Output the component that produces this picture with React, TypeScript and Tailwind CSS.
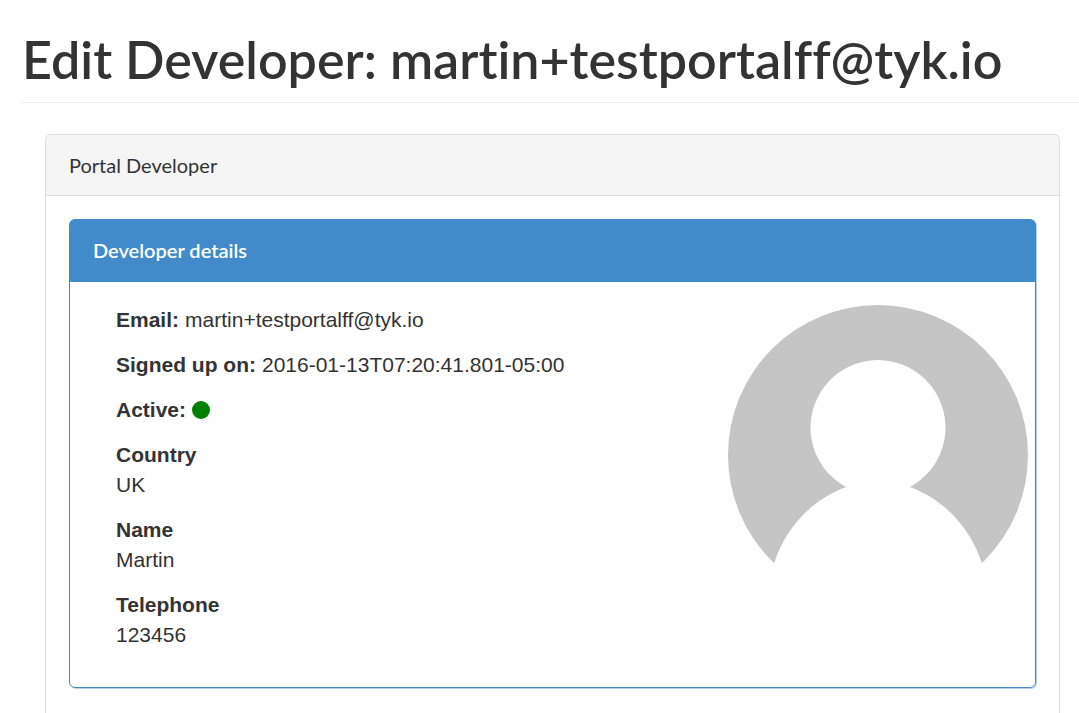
import type { ReactNode } from "react";

const profile = [
  { label: "Country", value: "UK" },
  { label: "Name", value: "Martin" },
  { label: "Telephone", value: "123456" },
];

function InlineField({ label, children }: { label: string; children: ReactNode }) {
  return (
    <div className="flex flex-wrap items-center gap-x-1.5">
      <dt className="font-bold">{label}</dt>
      <dd>{children}</dd>
    </div>
  );
}

function Avatar() {
  return (
    <svg
      viewBox="0 0 300 300"
      role="img"
      aria-label="Developer avatar"
      className="size-[300px] shrink-0"
    >
      <circle cx="150" cy="150" r="150" fill="#c5c5c5" />
      <path
        d="M118 182A67.500 67.500 0 1 1 182 182C217 195 244 224 255 262V300H45V262C56 224 83 195 118 182Z"
        fill="#ffffff"
      />
    </svg>
  );
}

export default function App() {
  return (
    <main className="min-h-screen bg-white pt-7 pl-[22px] font-['Liberation_Sans',Arial,sans-serif] text-[21px] leading-[30px] text-[#333333]">
      <header className="border-b border-[#eeeeee] pb-3">
        <h1 className="font-['Lato_Semibold','Lato',sans-serif] text-[52px] leading-[62px] font-semibold [font-variant-ligatures:none]">
          Edit Developer: martin+testportalff@tyk.io
        </h1>
      </header>
      <section className="mt-[31px] mr-[19px] ml-[23px] min-h-[600px] rounded-t-md border border-b-0 border-[#dddddd]">
        <h2 className="rounded-t-md border-b border-[#dddddd] bg-[#f5f5f5] px-[23px] py-[15px] font-['Lato',sans-serif] text-[20px]">
          Portal Developer
        </h2>
        <div className="p-[23px]">
          <section className="rounded-md border border-[#428bca] shadow-[1px_1px_0_#428bca66]">
            <h3 className="rounded-t-sm bg-[#428bca] px-[23px] pt-[15px] pb-[17px] font-['Lato_Semibold','Lato',sans-serif] text-[20px] font-semibold text-white">
              Developer details
            </h3>
            <div className="flex items-start justify-between pt-[23px] pr-[7px] pb-[37px] pl-[46px]">
              <dl className="flex flex-col gap-[15px]">
                <InlineField label="Email:">martin+testportalff@tyk.io</InlineField>
                <InlineField label="Signed up on:">2016-01-13T07:20:41.801-05:00</InlineField>
                <InlineField label="Active:">
                  <span
                    role="img"
                    aria-label="Yes"
                    className="block size-[18px] rounded-full bg-[#008000]"
                  />
                </InlineField>
                {profile.map(({ label, value }) => (
                  <div key={label}>
                    <dt className="font-bold">{label}</dt>
                    <dd>{value}</dd>
                  </div>
                ))}
              </dl>
              <Avatar />
            </div>
          </section>
        </div>
      </section>
    </main>
  );
}
